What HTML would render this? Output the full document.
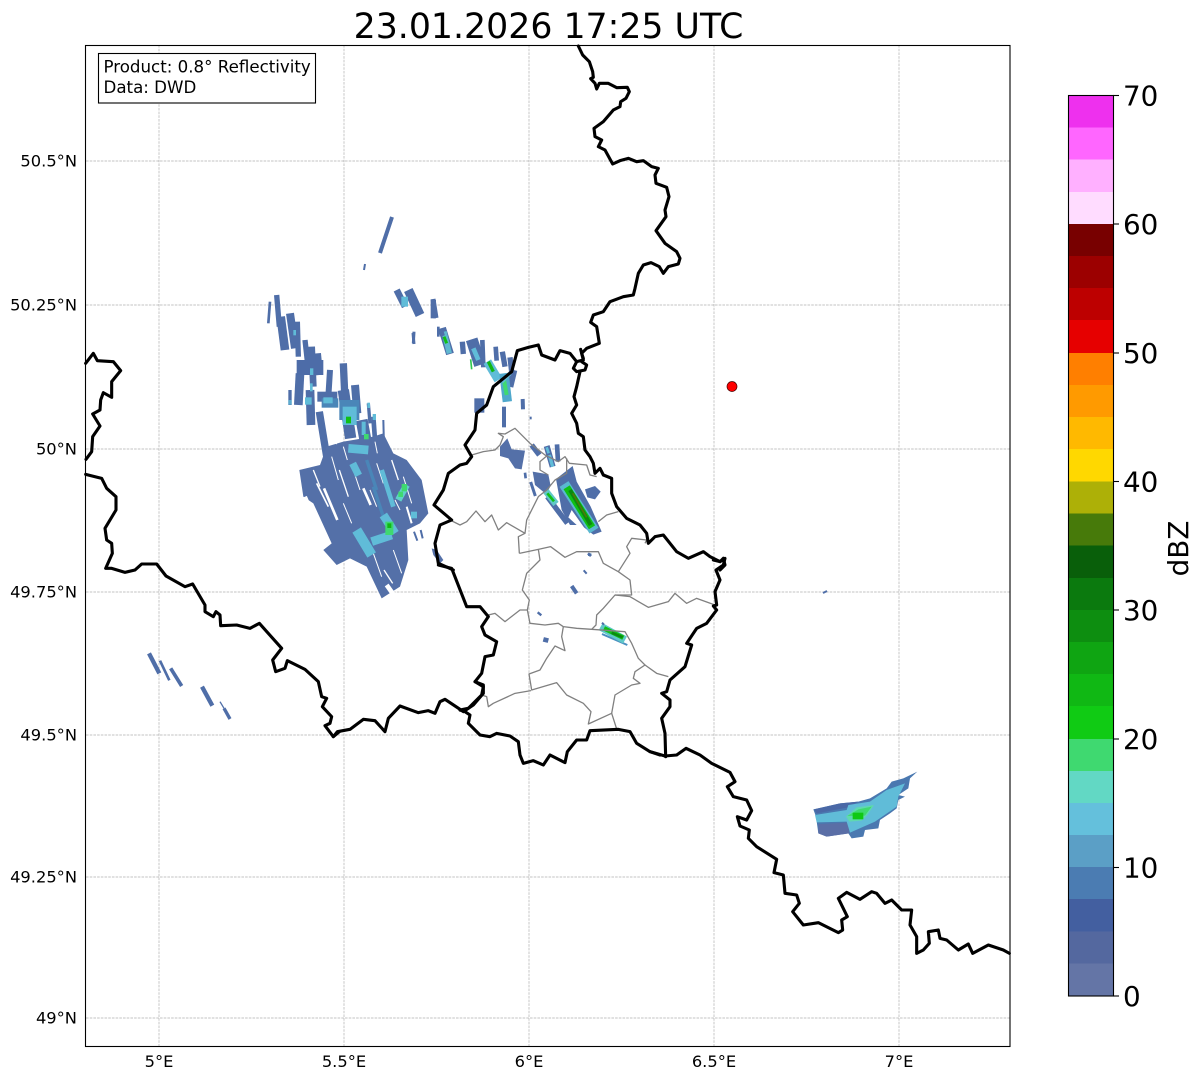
<!DOCTYPE html>
<html><head><meta charset="utf-8"><style>
html,body{margin:0;padding:0;background:#fff}
svg{display:block}
text{font-family:"DejaVu Sans",sans-serif;fill:#000}
.b polyline{fill:none;stroke:#000;stroke-width:3.1;stroke-linejoin:round;stroke-linecap:round;vector-effect:non-scaling-stroke}
.g polyline{fill:none;stroke:#808080;stroke-width:1.3;stroke-linejoin:round;vector-effect:non-scaling-stroke}
.t{font-size:16.3px}
.a{font-size:16.67px}
.c{font-size:27.78px}
.s line{fill:none;stroke-linecap:butt}
</style></head><body>
<svg width="1202" height="1081" viewBox="0 0 1202 1081" xmlns="http://www.w3.org/2000/svg">
<rect width="1202" height="1081" fill="#fff"/>
<text x="548.5" y="38" font-size="34.72" text-anchor="middle">23.01.2026 17:25 UTC</text>

<!-- grid -->
<g stroke="#b0b0b0" stroke-width=".7" stroke-dasharray="2.6 1.1">
<line x1="159" y1="45" x2="159" y2="1046"/><line x1="344" y1="45" x2="344" y2="1046"/><line x1="529" y1="45" x2="529" y2="1046"/><line x1="714" y1="45" x2="714" y2="1046"/><line x1="899" y1="45" x2="899" y2="1046"/>
<line x1="86" y1="161" x2="1010" y2="161"/><line x1="86" y1="305" x2="1010" y2="305"/><line x1="86" y1="449" x2="1010" y2="449"/><line x1="86" y1="592" x2="1010" y2="592"/><line x1="86" y1="735" x2="1010" y2="735"/><line x1="86" y1="877" x2="1010" y2="877"/><line x1="86" y1="1018" x2="1010" y2="1018"/>
</g>

<!-- main echo cluster -->
<g transform="translate(260,290) scale(.33333)">
<g class="s" stroke="#4f6ea8" stroke-width="16">
<line x1="50" y1="15" x2="58" y2="110"/><line x1="30" y1="35" x2="25" y2="100" stroke-width="8"/><line x1="62" y1="80" x2="75" y2="180" stroke-width="26"/><line x1="90" y1="70" x2="105" y2="175" stroke-width="24"/><line x1="112" y1="95" x2="115" y2="200" stroke-width="16"/><line x1="135" y1="150" x2="145" y2="240" stroke-width="16"/><line x1="172" y1="190" x2="178" y2="255" stroke-width="22"/><line x1="155" y1="170" x2="160" y2="290" stroke-width="20"/><line x1="120" y1="250" x2="115" y2="345" stroke-width="26"/><line x1="210" y1="240" x2="205" y2="320" stroke-width="18"/><line x1="250" y1="220" x2="255" y2="330" stroke-width="22"/><line x1="150" y1="300" x2="153" y2="405" stroke-width="26"/><line x1="285" y1="285" x2="292" y2="370" stroke-width="24"/><line x1="178" y1="365" x2="205" y2="530" stroke-width="22"/><line x1="250" y1="300" x2="272" y2="445" stroke-width="34"/><line x1="305" y1="390" x2="320" y2="470" stroke-width="36"/><line x1="325" y1="340" x2="330" y2="400" stroke-width="10"/><line x1="340" y1="380" x2="345" y2="450" stroke-width="14"/><line x1="370" y1="390" x2="372" y2="470" stroke-width="6"/><line x1="90" y1="300" x2="90" y2="345" stroke-width="10"/>
</g>
<rect x="110" y="210" width="80" height="45" fill="#4d6ca8"/>
<rect x="172" y="305" width="60" height="30" fill="#4f6ea8"/>
<polygon points="200,470 250,455 340,440 370,430 400,490 440,510 485,570 505,670 480,700 440,720 445,810 420,890 365,925 320,830 270,805 230,825 190,780 215,760 160,640 130,620 118,540 180,525" fill="#5470a8"/>
<g class="s" stroke="#fff">
<line x1="192" y1="595" x2="232" y2="690" stroke-width="8"/><line x1="170" y1="580" x2="205" y2="650" stroke-width="5"/><line x1="310" y1="595" x2="332" y2="645" stroke-width="8"/><line x1="238" y1="540" x2="265" y2="620" stroke-width="4"/><line x1="440" y1="650" x2="455" y2="700" stroke-width="6"/><line x1="448" y1="730" x2="480" y2="790" stroke-width="14"/><line x1="135" y1="620" x2="165" y2="690" stroke-width="12"/><line x1="372" y1="840" x2="398" y2="880" stroke-width="4"/><line x1="280" y1="540" x2="300" y2="600" stroke-width="3"/><line x1="350" y1="520" x2="370" y2="580" stroke-width="3"/><line x1="395" y1="510" x2="415" y2="570" stroke-width="4"/><line x1="430" y1="560" x2="455" y2="640" stroke-width="3"/><line x1="250" y1="640" x2="275" y2="700" stroke-width="3"/><line x1="215" y1="500" x2="235" y2="570" stroke-width="3"/><line x1="160" y1="540" x2="180" y2="590" stroke-width="4"/><line x1="380" y1="885" x2="412" y2="930" stroke-width="14"/><line x1="405" y1="630" x2="420" y2="660" stroke-width="3"/><line x1="330" y1="600" x2="350" y2="650" stroke-width="3"/><line x1="340" y1="790" x2="365" y2="860" stroke-width="3"/><line x1="400" y1="780" x2="425" y2="850" stroke-width="3"/><line x1="250" y1="470" x2="262" y2="510" stroke-width="3"/><line x1="345" y1="455" x2="352" y2="490" stroke-width="3"/><line x1="208" y1="445" x2="230" y2="462" stroke-width="3"/>
</g>
<g class="s" stroke="#4f6ea8"><line x1="462" y1="725" x2="472" y2="752" stroke-width="6"/><line x1="482" y1="720" x2="488" y2="745" stroke-width="6"/></g>
<g class="s">
<line x1="265" y1="475" x2="325" y2="480" stroke="#60bcd8" stroke-width="26"/>
<line x1="278" y1="520" x2="296" y2="556" stroke="#60bcd8" stroke-width="22"/>
<line x1="320" y1="510" x2="350" y2="600" stroke="#4a86b8" stroke-width="10"/>
<line x1="365" y1="540" x2="400" y2="650" stroke="#60bcd8" stroke-width="14"/>
<line x1="340" y1="590" x2="370" y2="680" stroke="#4a86b8" stroke-width="10"/>
<line x1="290" y1="720" x2="335" y2="795" stroke="#60bcd8" stroke-width="30"/>
<line x1="335" y1="755" x2="395" y2="735" stroke="#60bcd8" stroke-width="26"/>
<line x1="370" y1="675" x2="405" y2="730" stroke="#60bcd8" stroke-width="26"/>
<line x1="415" y1="630" x2="440" y2="585" stroke="#60d0c8" stroke-width="20"/>
<line x1="462" y1="665" x2="462" y2="685" stroke="#60bcd8" stroke-width="18"/>
</g>
<rect x="185" y="325" width="50" height="28" fill="#4a86b8"/>
<rect x="238" y="330" width="60" height="60" fill="#4a86b8"/>
<g fill="#60bcd8">
<rect x="190" y="322" width="28" height="18"/><rect x="248" y="350" width="42" height="55"/><rect x="322" y="338" width="8" height="16"/><rect x="338" y="372" width="10" height="18"/><rect x="305" y="395" width="12" height="40"/><rect x="135" y="322" width="20" height="22"/><rect x="150" y="280" width="8" height="24"/><rect x="100" y="120" width="8" height="16"/><rect x="150" y="235" width="10" height="20"/><rect x="85" y="330" width="10" height="14" opacity=".8"/>
</g>
<g fill="#3fd970"><rect x="376" y="695" width="24" height="40"/><rect x="425" y="582" width="16" height="22"/><rect x="312" y="432" width="14" height="16"/><rect x="415" y="605" width="14" height="16"/></g>
<rect x="258" y="380" width="15" height="20" fill="#10c015"/><rect x="382" y="700" width="12" height="14" fill="#10b814"/>
<!-- top right cell -->
<g class="s" stroke="#4f6ea8"><line x1="410" y1="0" x2="435" y2="50" stroke-width="20"/><line x1="445" y1="0" x2="480" y2="75" stroke-width="28"/><line x1="520" y1="30" x2="520" y2="85" stroke-width="16"/><line x1="462" y1="125" x2="460" y2="160" stroke-width="9"/><line x1="535" y1="110" x2="535" y2="140" stroke-width="8"/></g>
<rect x="424" y="20" width="20" height="30" fill="#60bcd8"/>
</g>

<!-- other echoes NW -->
<g class="s">
<line x1="392" y1="217" x2="380" y2="253" stroke="#4f6ea8" stroke-width="4"/><line x1="365" y1="264" x2="364" y2="270" stroke="#4f6ea8" stroke-width="2"/><line x1="433" y1="299" x2="436" y2="318" stroke="#4f6ea8" stroke-width="5"/><line x1="413" y1="333" x2="414" y2="344" stroke="#4f6ea8" stroke-width="3"/><line x1="442" y1="328" x2="450" y2="354" stroke="#4f6ea8" stroke-width="8"/><line x1="444" y1="336" x2="448" y2="350" stroke="#30c870" stroke-width="3"/>
</g>

<!-- center echoes -->
<g transform="translate(430,330) scale(.33333)">
<g class="s" stroke="#4f6ea8">
<line x1="97" y1="35" x2="100" y2="72" stroke-width="16"/><line x1="125" y1="28" x2="150" y2="105" stroke-width="36"/><line x1="157" y1="30" x2="160" y2="112" stroke-width="14"/><line x1="197" y1="50" x2="200" y2="92" stroke-width="14"/><line x1="217" y1="65" x2="225" y2="110" stroke-width="16"/><line x1="240" y1="82" x2="245" y2="125" stroke-width="16"/><line x1="250" y1="120" x2="238" y2="170" stroke-width="24"/><line x1="222" y1="230" x2="222" y2="292" stroke-width="12"/><line x1="148" y1="205" x2="148" y2="248" stroke-width="30"/><line x1="278" y1="207" x2="279" y2="238" stroke-width="12"/><line x1="302" y1="260" x2="302" y2="268" stroke-width="6"/>
<line x1="305" y1="345" x2="328" y2="375" stroke-width="16"/><line x1="350" y1="348" x2="368" y2="410" stroke-width="18"/><line x1="381" y1="343" x2="384" y2="395" stroke-width="14"/><line x1="285" y1="428" x2="287" y2="445" stroke-width="8"/><line x1="302" y1="456" x2="316" y2="498" stroke-width="9"/><line x1="352" y1="500" x2="412" y2="580" stroke-width="16"/>
</g>
<polygon points="210,350 232,325 245,358 285,362 275,418 255,415 235,385 210,378" fill="#5470a8"/>
<polygon points="308,425 355,433 362,468 348,492 315,465" fill="#5470a8"/>
<polygon points="378,447 428,408 440,455 482,530 515,605 490,614 462,592 425,540 415,562 440,585 420,585 395,540" fill="#4f6ea8"/>
<polygon points="465,478 495,468 512,485 495,508 472,502" fill="#4f6ea8"/>
<g class="s">
<line x1="172" y1="95" x2="205" y2="150" stroke="#60bcd8" stroke-width="26"/><line x1="222" y1="130" x2="232" y2="215" stroke="#4fa8cc" stroke-width="28"/><line x1="222" y1="150" x2="230" y2="195" stroke="#3fd970" stroke-width="12"/><line x1="175" y1="95" x2="190" y2="125" stroke="#10b814" stroke-width="10"/><line x1="122" y1="88" x2="125" y2="118" stroke="#30c850" stroke-width="5"/><line x1="130" y1="55" x2="145" y2="90" stroke="#60bcd8" stroke-width="14"/><line x1="215" y1="155" x2="240" y2="130" stroke="#60bcd8" stroke-width="12"/><line x1="358" y1="375" x2="368" y2="410" stroke="#60bcd8" stroke-width="10"/><line x1="350" y1="352" x2="356" y2="370" stroke="#60bcd8" stroke-width="8"/>
<line x1="42" y1="5" x2="58" y2="70" stroke="#5fb8d0" stroke-width="16"/><line x1="42" y1="20" x2="50" y2="40" stroke="#10c015" stroke-width="9"/><line x1="32" y1="0" x2="38" y2="18" stroke="#4f6ea8" stroke-width="14"/>
<line x1="348" y1="484" x2="378" y2="522" stroke="#60c8c8" stroke-width="20"/><line x1="352" y1="490" x2="372" y2="514" stroke="#10c015" stroke-width="8"/>
<line x1="402" y1="462" x2="492" y2="602" stroke="#5ab8d0" stroke-width="32"/><line x1="410" y1="472" x2="486" y2="592" stroke="#10c015" stroke-width="22"/><line x1="420" y1="480" x2="482" y2="585" stroke="#0a8a10" stroke-width="12"/><line x1="428" y1="490" x2="470" y2="562" stroke="#4e7a0a" stroke-width="5"/>
</g>
<rect x="474" y="670" width="10" height="8" fill="#4a86b8"/>
</g>
<g transform="translate(430,530) scale(.33333)">
<polygon points="5,55 20,60 40,90 30,100 10,75" fill="#5470a8"/>
<g class="s" stroke="#4f6ea8"><line x1="474" y1="70" x2="483" y2="78" stroke-width="8"/><line x1="461" y1="121" x2="470" y2="131" stroke-width="6"/><line x1="425" y1="168" x2="440" y2="190" stroke-width="12"/><line x1="323" y1="247" x2="334" y2="256" stroke-width="7"/><line x1="340" y1="328" x2="355" y2="332" stroke-width="14"/></g>
<g class="s"><line x1="516" y1="312" x2="592" y2="345" stroke="#4a90c0" stroke-width="6"/><line x1="512" y1="290" x2="585" y2="330" stroke="#5fc8c8" stroke-width="24"/><line x1="522" y1="295" x2="580" y2="323" stroke="#10c015" stroke-width="14"/><line x1="545" y1="308" x2="578" y2="322" stroke="#0a8a10" stroke-width="8"/><line x1="516" y1="278" x2="522" y2="284" stroke="#4f6ea8" stroke-width="6"/></g>
</g>

<!-- SW echoes -->
<g transform="translate(80,340) scale(.33333)" class="s" stroke="#4f6ea8">
<line x1="207" y1="940" x2="238" y2="1000" stroke-width="13"/><line x1="240" y1="962" x2="268" y2="1021" stroke-width="8"/><line x1="272" y1="985" x2="305" y2="1038" stroke-width="11"/><line x1="366" y1="1040" x2="397" y2="1097" stroke-width="13"/><line x1="420" y1="1085" x2="432" y2="1105" stroke-width="4"/><line x1="432" y1="1105" x2="450" y2="1137" stroke-width="10"/>
</g>
<line x1="823" y1="593" x2="827" y2="591" stroke="#4f6ea8" stroke-width="2"/>

<!-- SE echo -->
<g transform="translate(790,750) scale(.33333)">
<polygon points="70,178 150,160 205,155 240,145 290,115 305,95 340,85 382,65 360,85 355,115 325,135 345,140 325,150 320,175 300,190 270,210 265,235 225,240 220,260 185,265 175,250 110,260 85,250 78,200" fill="#4a78b0"/>
<polygon points="85,222 175,218 178,250 110,260 85,250" fill="#5a6ea6"/>
<polygon points="72,178 150,160 205,155 175,172 80,190" fill="#4a68a6"/>
<polygon points="75,195 170,180 175,165 240,155 290,120 345,100 325,140 320,170 255,215 180,248 170,215 80,217" fill="#60bcd8"/>
<polygon points="168,200 200,172 252,165 232,195 215,212 178,215" fill="#5fd8b0"/>
<polygon points="172,198 205,178 245,170 225,197" fill="#3fd970"/>
<rect x="188" y="188" width="32" height="20" fill="#10c814"/>
</g>

<!-- gray admin borders -->
<g class="g">
<g transform="translate(430,330) scale(.33333)">
<polyline points="125,375 160,365 195,360 210,345 220,320 205,310 225,312 255,295 300,340 345,375 385,395 405,380 418,400 470,405 480,435 500,440"/>
<polyline points="350,378 330,395 330,420 355,435"/>
<polyline points="410,385 410,430 375,450 350,480 325,500 290,570 285,610"/>
<polyline points="60,570 90,585 110,575 138,543 165,575 185,555 205,600 230,578 285,610 265,620 268,670"/>
<polyline points="565,545 530,555 505,575"/>
</g>
<g transform="translate(430,530) scale(.33333)">
<polyline points="268,70 325,58 362,50 405,82 440,65 505,65 520,100 565,125 600,150 605,195 555,195 520,235 500,255 498,285 485,298 440,295 400,290 385,280 345,285 300,280 292,240 298,210 277,180 290,130 330,90 325,58"/>
<polyline points="292,240 270,240 225,275 195,250 175,255"/>
<polyline points="565,125 600,70 590,50 605,25 650,30 645,40"/>
<polyline points="555,195 600,200 655,232 715,215 735,190 770,220 800,205 855,225"/>
<polyline points="400,290 395,320 405,362 375,348 350,385 330,420 297,432 305,480 380,458 410,495 460,520 483,545 475,582 545,550 560,597"/>
<polyline points="303,482 255,490 190,520 175,530 170,500 155,495"/>
<polyline points="485,298 585,305 605,340 625,385 645,405 615,425 610,445 630,460 605,465 555,495 545,550"/>
<polyline points="645,405 680,430 715,440"/>
</g>
</g>

<!-- black borders -->
<g class="b">
<g transform="translate(540,40) scale(.33333)">
<polyline points="115,18 128,45 148,65 158,95 160,112 152,116 165,130 170,147 178,130 205,130 230,143 262,142 268,155 258,175 242,185 240,200 220,210 190,245 162,265 165,290 185,300 175,320 195,330 218,372 240,362 265,355 290,365 310,362 335,380 355,385 345,405 348,430 380,442 387,470 375,510 378,530 348,572 375,610 410,635 420,655 415,672 385,680 370,700 358,680 333,668 310,675 295,700 285,745 280,765 250,770 210,785 190,815 160,825 152,847 170,860 178,910 140,925 125,940 130,955"/>
</g>
<g transform="translate(430,330) scale(.33333)">
<polyline points="452,58 460,90 440,95 430,115 440,125 465,120 470,105 455,95"/>
<polyline points="450,125 440,170 432,200 440,225 425,250 440,280 445,310 460,320 465,360 480,380 490,400 495,430 510,415 520,435 545,445 545,490 560,530 590,565 630,585 650,610 655,640 675,620 700,615 740,665 775,685 820,665 840,680 870,695 880,685 885,705 870,720"/>
<polyline points="440,95 420,70 390,62 375,90 335,75 325,45 295,52 262,62 245,125 190,170 170,225 140,250 135,300 105,345 125,380 110,400 90,405 55,430 40,480 12,525 65,570 30,585 15,640 25,700 70,720"/>
</g>
<g transform="translate(430,530) scale(.33333)">
<polyline points="850,90 870,95 885,85 880,105 858,120 870,150 855,185 860,225 850,228 860,240 830,280 800,295 770,340 785,345 765,410 720,450 710,485 695,490 720,510 720,530 695,565 705,610 707,680"/>
<polyline points="25,105 65,115 110,230 150,230 175,260 155,290 165,315 200,335 190,375 165,380 155,430 135,455 160,470 155,495 115,535 90,540"/>
</g>
<g transform="translate(80,340) scale(.33333)">
<polyline points="17,70 40,40 52,62 100,65 122,92 95,125 95,172 70,158 62,180 60,210 38,222 60,258 38,290 35,335 18,358"/>
<polyline points="17,403 65,415 80,445 108,470 108,510 75,565 80,600 95,610 97,640 77,685 95,685 135,697 165,690 185,672 230,672 258,708 315,740 338,732 375,795 375,815 400,830 408,815 420,825 422,857 470,855 510,865 538,850 605,925 578,960 587,995 615,985 622,962 675,988 715,1025 725,1070 740,1075 727,1100 755,1130 750,1150 735,1157 760,1190 778,1175"/>
</g>
<g transform="translate(320,680) scale(.33333)">
<polyline points="40,170 52,155 90,148 130,118 165,122 195,155 205,115 240,78 295,98 325,92 345,100 360,65 375,58 420,88 430,95 460,75 490,40 490,15 465,5"/>
<polyline points="420,90 435,95 450,105 445,130 480,165 510,170 530,160 570,168 595,185 600,225 610,250 640,242 670,255 690,225 735,248 742,215 770,180 800,180 810,152 895,148 930,155 950,190 990,215 1020,225"/>
</g>
<g transform="translate(650,740) scale(.33333)">
<polyline points="0,35 45,48 80,45 108,25 150,45 185,70 240,97 255,125 232,140 250,170 290,180 305,212 290,240 262,230 270,258 298,270 295,295 320,320 380,358 372,398 400,405 405,460 440,465 448,490 428,515 460,555 505,548 565,578 578,570 575,540 592,530 565,475 590,457 630,478 665,455 680,460 705,490 725,480 755,510 785,510 780,555 800,590 800,640 820,630 838,610 835,575 865,570 870,595 890,600 925,630 955,612 968,640 1015,615 1060,630 1078,640"/>
</g>
</g>

<circle cx="732" cy="386.5" r="5" fill="#f00" stroke="#400" stroke-width=".7"/>

<!-- axes frame -->
<rect x="85.5" y="45.5" width="924.5" height="1001" fill="none" stroke="#000" stroke-width="1.1"/>

<!-- annotation -->
<rect x="98.5" y="53.5" width="217" height="49.5" fill="#fff" stroke="#000" stroke-width="1.1"/>
<text class="a" x="103.5" y="72.7">Product: 0.8° Reflectivity</text>
<text class="a" x="103.5" y="93">Data: DWD</text>

<!-- axis labels -->
<g class="t" text-anchor="end">
<text x="77" y="166.5">50.5°N</text><text x="77" y="310.5">50.25°N</text><text x="77" y="454.5">50°N</text><text x="77" y="597.5">49.75°N</text><text x="77" y="740.5">49.5°N</text><text x="77" y="882.5">49.25°N</text><text x="77" y="1023.5">49°N</text>
</g>
<g class="t" text-anchor="middle">
<text x="159" y="1067">5°E</text><text x="344" y="1067">5.5°E</text><text x="529" y="1067">6°E</text><text x="714" y="1067">6.5°E</text><text x="899" y="1067">7°E</text>
</g>

<!-- colorbar -->
<g shape-rendering="crispEdges">
<rect x="1068.5" y="95.5" width="45" height="32.6" fill="#ee30ee"/>
<rect x="1068.5" y="127.5" width="45" height="32.6" fill="#ff66ff"/>
<rect x="1068.5" y="159.5" width="45" height="33" fill="#ffb0ff"/>
<rect x="1068.5" y="192" width="45" height="32.5" fill="#ffdcff"/>
<rect x="1068.5" y="224" width="45" height="32.5" fill="#780000"/>
<rect x="1068.5" y="256" width="45" height="32.5" fill="#9c0000"/>
<rect x="1068.5" y="288" width="45" height="32.5" fill="#bd0000"/>
<rect x="1068.5" y="320" width="45" height="33.5" fill="#e60000"/>
<rect x="1068.5" y="353" width="45" height="32.5" fill="#ff7f00"/>
<rect x="1068.5" y="385" width="45" height="32.5" fill="#ff9a00"/>
<rect x="1068.5" y="417" width="45" height="32.5" fill="#ffb900"/>
<rect x="1068.5" y="449" width="45" height="33" fill="#ffd800"/>
<rect x="1068.5" y="481.5" width="45" height="32.5" fill="#adb007"/>
<rect x="1068.5" y="513.5" width="45" height="32.5" fill="#477a0a"/>
<rect x="1068.5" y="545.5" width="45" height="32.5" fill="#095f0a"/>
<rect x="1068.5" y="578" width="45" height="32.5" fill="#0b7a0e"/>
<rect x="1068.5" y="610" width="45" height="32.5" fill="#0d8e10"/>
<rect x="1068.5" y="642" width="45" height="32.5" fill="#0fa512"/>
<rect x="1068.5" y="674" width="45" height="32.5" fill="#10b814"/>
<rect x="1068.5" y="706" width="45" height="33.5" fill="#10cb14"/>
<rect x="1068.5" y="739" width="45" height="32.5" fill="#3fd970"/>
<rect x="1068.5" y="771" width="45" height="32.5" fill="#62d8c4"/>
<rect x="1068.5" y="803" width="45" height="32.5" fill="#64c0dc"/>
<rect x="1068.5" y="835" width="45" height="32.5" fill="#5b9fc6"/>
<rect x="1068.5" y="867" width="45" height="32.5" fill="#4b7cb2"/>
<rect x="1068.5" y="899" width="45" height="33" fill="#435fa0"/>
<rect x="1068.5" y="931.5" width="45" height="32.5" fill="#54689f"/>
<rect x="1068.5" y="963.5" width="45" height="32.5" fill="#6475a6"/>
</g>
<rect x="1068.5" y="95.5" width="45" height="900.5" fill="none" stroke="#000" stroke-width="1.1"/>
<g stroke="#000" stroke-width="1.1">
<line x1="1113" y1="95.5" x2="1119" y2="95.5"/><line x1="1113" y1="224" x2="1119" y2="224"/><line x1="1113" y1="353" x2="1119" y2="353"/><line x1="1113" y1="481.5" x2="1119" y2="481.5"/><line x1="1113" y1="610" x2="1119" y2="610"/><line x1="1113" y1="739" x2="1119" y2="739"/><line x1="1113" y1="867.5" x2="1119" y2="867.5"/><line x1="1113" y1="996" x2="1119" y2="996"/>
</g>
<g class="c">
<text x="1123" y="105.5">70</text><text x="1123" y="234">60</text><text x="1123" y="363">50</text><text x="1123" y="491.5">40</text><text x="1123" y="620">30</text><text x="1123" y="749">20</text><text x="1123" y="877.5">10</text><text x="1123" y="1006">0</text>
</g>
<text class="c" transform="translate(1188,548.5) rotate(-90)" text-anchor="middle">dBZ</text>
</svg>
</body></html>
